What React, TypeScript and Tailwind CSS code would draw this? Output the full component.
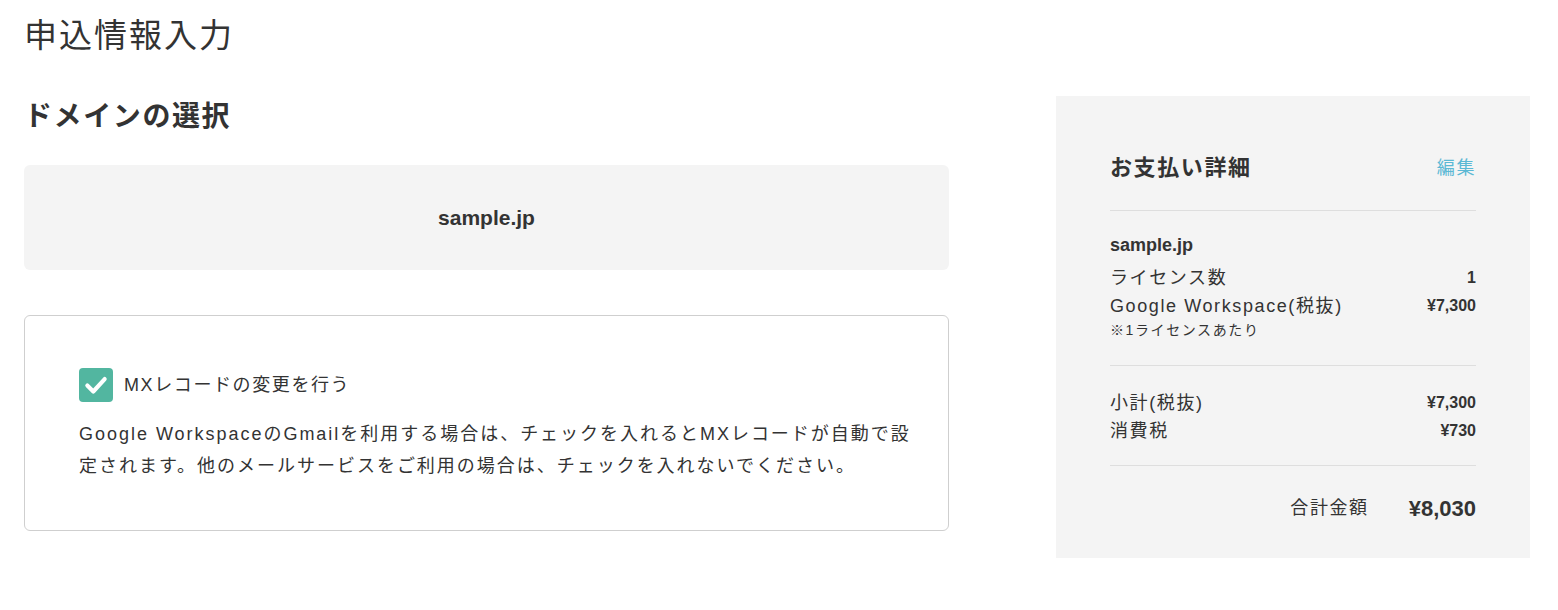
const font = "font-['Liberation_Sans','Noto_Sans_CJK_JP',sans-serif]";

function CheckIcon() {
  return (
    <svg viewBox="0 0 24 24" className="h-[26px] w-[26px]" fill="none" stroke="white" strokeWidth="3.8" strokeLinecap="round" strokeLinejoin="round">
      <polyline points="4,12.5 9.5,18 20,6.5" />
    </svg>
  );
}

function Row({ label, value, bold = true }: { label: string; value: string; bold?: boolean }) {
  return (
    <div className="flex items-center justify-between text-[18px] leading-[28px]">
      <span>{label}</span>
      <span className={bold ? "text-[16px] font-bold tracking-normal" : ""}>{value}</span>
    </div>
  );
}

export default function App() {
  return (
    <div className={`${font} min-h-[610px] w-[1558px] bg-white px-[24px] pt-[12px] tracking-[0.1em] text-[#333]`}>
      <h1 className="text-[33px] leading-[48px] tracking-[0.06em]">申込情報入力</h1>

      <div className="flex items-start">
        {/* Left column */}
        <div className="w-[925px] shrink-0">
          <h2 className="mt-[37px] text-[28px] font-bold leading-[40px]">ドメインの選択</h2>

          <div className="mt-[28px] flex h-[105px] items-center justify-center rounded-[6px] bg-[#f4f4f4]">
            <span className="text-[21px] font-bold tracking-normal">sample.jp</span>
          </div>

          <div className="mt-[45px] rounded-[6px] border border-[#cfcfcf] pl-[54px] pr-[30px] pt-[52px] pb-[48px]">
            <label className="flex items-center gap-[11px]">
              <span className="flex h-[34px] w-[34px] items-center justify-center rounded-[4px] bg-[#52b6a0]">
                <CheckIcon />
              </span>
              <span className="text-[18px]">MXレコードの変更を行う</span>
            </label>
            <p className="mt-[16px] whitespace-nowrap text-[18px] leading-[32px] tracking-[0.11em]">
              Google WorkspaceのGmailを利用する場合は、チェックを入れるとMXレコードが自動で設
              <br />
              定されます。他のメールサービスをご利用の場合は、チェックを入れないでください。
            </p>
          </div>
        </div>

        {/* Right column: payment summary */}
        <aside className="ml-[107px] mt-[36px] w-[474px] shrink-0 bg-[#f4f4f4] px-[54px] pt-[54px] pb-[32px]">
          <div className="flex items-center justify-between pb-[24px]">
            <h3 className="text-[22px] font-bold leading-[36px]">お支払い詳細</h3>
            <a className="text-[18px] text-[#5bb8d4]">編集</a>
          </div>

          <div className="border-t border-[#dedede] pt-[20px] pb-[25px]">
            <div className="mb-[5px] text-[18px] font-bold leading-[28px] tracking-normal">sample.jp</div>
            <Row label="ライセンス数" value="1" />
            <Row label="Google Workspace(税抜)" value="¥7,300" />
            <div className="text-[14px] leading-[20px]">※1ライセンスあたり</div>
          </div>

          <div className="border-t border-[#dedede] pt-[23px] pb-[20px]">
            <Row label="小計(税抜)" value="¥7,300" />
            <Row label="消費税" value="¥730" />
          </div>

          <div className="flex items-center justify-end gap-[40px] border-t border-[#dedede] pt-[24px]">
            <span className="text-[18px] leading-[36px]">合計金額</span>
            <span className="text-[22px] font-bold tracking-normal">¥8,030</span>
          </div>
        </aside>
      </div>
    </div>
  );
}
